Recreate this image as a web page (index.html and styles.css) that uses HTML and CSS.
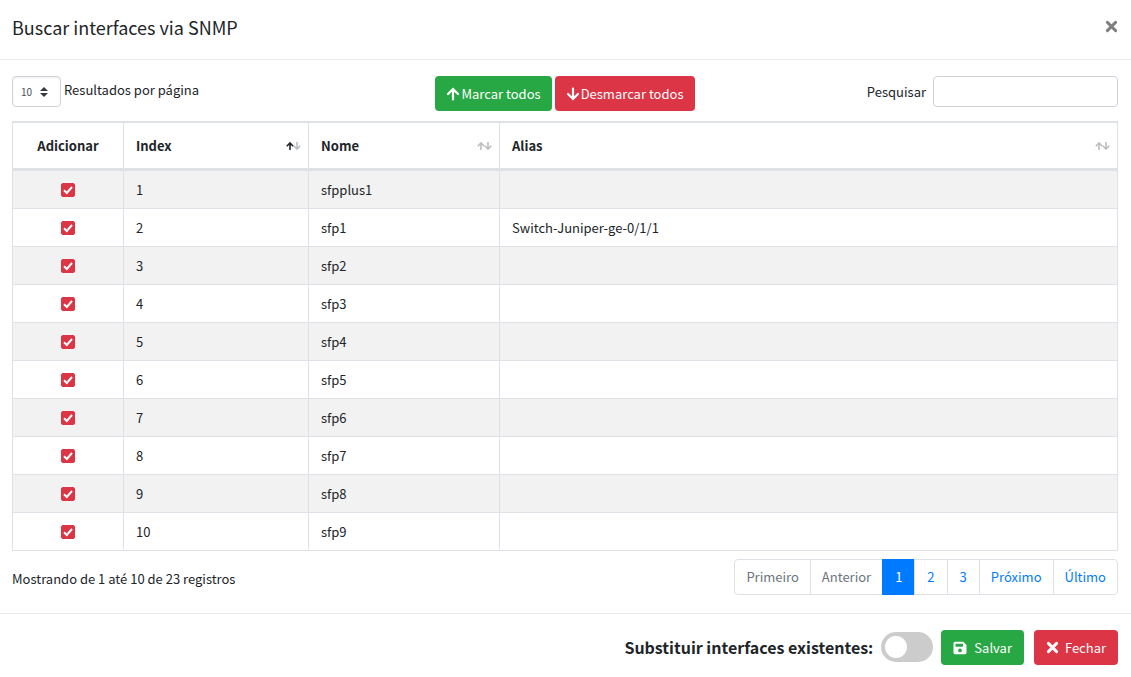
FILE: index.html
```html
<!DOCTYPE html>
<html lang="pt-BR">
<head>
<meta charset="utf-8">
<meta name="viewport" content="width=device-width, initial-scale=1">
<title>Buscar interfaces via SNMP</title>
<link rel="stylesheet" href="styles.css">
</head>
<body>
<svg class="defs" aria-hidden="true">
  <symbol id="arrow-up" viewBox="0 0 14 14"><path d="M7 12.500V2M2 7l5-5 5 5" fill="none" stroke="currentColor" stroke-width="2.200" stroke-linecap="round"/></symbol>
  <symbol id="arrow-down" viewBox="0 0 14 14"><path d="M7 1.500V12M2 7l5 5 5-5" fill="none" stroke="currentColor" stroke-width="2.200" stroke-linecap="round"/></symbol>
  <symbol id="cross" viewBox="0 0 12 12"><path d="M2.200 2.200l7.600 7.600M9.800 2.200l-7.600 7.600" fill="none" stroke="currentColor" stroke-width="2.700" stroke-linecap="round"/></symbol>
  <symbol id="save" viewBox="0 0 14 14"><path fill-rule="evenodd" fill="currentColor" d="M2 .8h8.200L13.500 4v7.700a1.500 1.500 0 0 1-1.500 1.500H2A1.500 1.500 0 0 1 .5 11.700V2.300A1.500 1.500 0 0 1 2 .8zM2.500 2.800v3h7.500v-3zM7 7.500a1.900 1.900 0 1 0 0 3.800 1.900 1.900 0 0 0 0-3.800z"/></symbol>
  <symbol id="sort" viewBox="0 0 15 10"><path class="sort-up" d="M4 9V1.500M.8 5.200L4 2l3.200 3.200"/><path class="sort-down" d="M11 1v7.500M7.800 4.800L11 8l3.200-3.200"/></symbol>
  <symbol id="tick" viewBox="0 0 14 14"><path d="M3 7.200l2.800 2.800L11 4" fill="none" stroke="#fff" stroke-width="2"/></symbol>
</svg>
<main class="modal">
  <header class="modal-header">
    <h1 class="modal-title">Buscar interfaces via SNMP</h1>
    <button class="close" type="button" aria-label="Fechar janela"><svg class="icon-small"><use href="#cross"/></svg></button>
  </header>
  <section class="modal-body">
    <div class="toolbar">
      <div class="length">
        <span class="select-wrap">
          <select id="length" class="select"><option>10</option><option>25</option><option>50</option></select>
          <svg class="select-arrows" viewBox="0 0 8 10"><path d="M4 0L8 4H0zM4 10L0 6h8z" fill="#343a40"/></svg>
        </span>
        <label for="length">Resultados por página</label>
      </div>
      <div class="actions">
        <button class="btn btn-green" type="button"><svg class="icon"><use href="#arrow-up"/></svg>Marcar todos</button>
        <button class="btn btn-red" type="button"><svg class="icon"><use href="#arrow-down"/></svg>Desmarcar todos</button>
      </div>
      <div class="search">
        <label for="search">Pesquisar</label>
        <input id="search" class="search-input" type="search">
      </div>
    </div>
    <table class="table">
      <colgroup><col class="col-add"><col class="col-index"><col class="col-name"><col></colgroup>
      <thead>
        <tr>
          <th class="center">Adicionar</th>
          <th><div class="head">Index<svg class="sort ascending"><use href="#sort"/></svg></div></th>
          <th><div class="head">Nome<svg class="sort"><use href="#sort"/></svg></div></th>
          <th><div class="head">Alias<svg class="sort"><use href="#sort"/></svg></div></th>
        </tr>
      </thead>
      <tbody>
        <tr><td class="center"><span class="check-wrap"><input class="check" type="checkbox" aria-label="Adicionar sfpplus1" checked><svg class="tick"><use href="#tick"/></svg></span></td><td>1</td><td>sfpplus1</td><td></td></tr>
        <tr><td class="center"><span class="check-wrap"><input class="check" type="checkbox" aria-label="Adicionar sfp1" checked><svg class="tick"><use href="#tick"/></svg></span></td><td>2</td><td>sfp1</td><td>Switch-Juniper-ge-0/1/1</td></tr>
        <tr><td class="center"><span class="check-wrap"><input class="check" type="checkbox" aria-label="Adicionar sfp2" checked><svg class="tick"><use href="#tick"/></svg></span></td><td>3</td><td>sfp2</td><td></td></tr>
        <tr><td class="center"><span class="check-wrap"><input class="check" type="checkbox" aria-label="Adicionar sfp3" checked><svg class="tick"><use href="#tick"/></svg></span></td><td>4</td><td>sfp3</td><td></td></tr>
        <tr><td class="center"><span class="check-wrap"><input class="check" type="checkbox" aria-label="Adicionar sfp4" checked><svg class="tick"><use href="#tick"/></svg></span></td><td>5</td><td>sfp4</td><td></td></tr>
        <tr><td class="center"><span class="check-wrap"><input class="check" type="checkbox" aria-label="Adicionar sfp5" checked><svg class="tick"><use href="#tick"/></svg></span></td><td>6</td><td>sfp5</td><td></td></tr>
        <tr><td class="center"><span class="check-wrap"><input class="check" type="checkbox" aria-label="Adicionar sfp6" checked><svg class="tick"><use href="#tick"/></svg></span></td><td>7</td><td>sfp6</td><td></td></tr>
        <tr><td class="center"><span class="check-wrap"><input class="check" type="checkbox" aria-label="Adicionar sfp7" checked><svg class="tick"><use href="#tick"/></svg></span></td><td>8</td><td>sfp7</td><td></td></tr>
        <tr><td class="center"><span class="check-wrap"><input class="check" type="checkbox" aria-label="Adicionar sfp8" checked><svg class="tick"><use href="#tick"/></svg></span></td><td>9</td><td>sfp8</td><td></td></tr>
        <tr><td class="center"><span class="check-wrap"><input class="check" type="checkbox" aria-label="Adicionar sfp9" checked><svg class="tick"><use href="#tick"/></svg></span></td><td>10</td><td>sfp9</td><td></td></tr>
      </tbody>
    </table>
    <div class="table-footer">
      <p class="info">Mostrando de 1 até 10 de 23 registros</p>
      <nav class="pagination" aria-label="Paginação">
        <a class="page disabled" href="#">Primeiro</a>
        <a class="page disabled" href="#">Anterior</a>
        <a class="page number current" href="#" aria-current="page">1</a>
        <a class="page number" href="#">2</a>
        <a class="page number" href="#">3</a>
        <a class="page" href="#">Próximo</a>
        <a class="page" href="#">Último</a>
      </nav>
    </div>
  </section>
  <footer class="modal-footer">
    <label class="replace" for="replace">Substituir interfaces existentes:</label>
    <input id="replace" class="switch" type="checkbox" role="switch">
    <button class="btn btn-wide btn-green" type="button"><svg class="icon"><use href="#save"/></svg>Salvar</button>
    <button class="btn btn-wide btn-red btn-last" type="button"><svg class="icon-small"><use href="#cross"/></svg>Fechar</button>
  </footer>
</main>
</body>
</html>
```
FILE: styles.css
```css
* { box-sizing: border-box; }
body {
  margin: 0;
  background: #fff;
  color: #212529;
  font: 13px/21px "Noto Sans CJK SC", "Noto Sans", sans-serif;
}
button, input, select { font: inherit; }
.defs { position: absolute; width: 0; height: 0; }

.modal-header {
  display: flex;
  justify-content: space-between;
  align-items: flex-start;
  padding: 13px 13px 18px 12px;
  border-bottom: 1px solid #e9ecef;
}
.modal-title { margin: 0; font-size: 18px; line-height: 28px; font-weight: 400; }
.close { display: flex; padding: 7px 0; border: 0; background: none; color: #7f7f7f; cursor: pointer; }

.modal-body { padding: 16px 13px 18px 12px; }
.toolbar {
  display: grid;
  grid-template-columns: 1fr auto 1fr;
  align-items: start;
  margin-bottom: 10px;
}
.length { display: flex; gap: 3px; line-height: 28px; }
.select-wrap { position: relative; display: flex; }
.select {
  appearance: none;
  width: 49px;
  height: 31px;
  padding: 0 8px;
  border: 1px solid #ced4da;
  border-radius: 4px;
  background: #fff;
  color: #495057;
  font-size: 10px;
  box-shadow: inset 0 1px 2px rgba(0, 0, 0, .08);
}
.select-arrows { position: absolute; top: 11px; right: 13px; width: 8px; height: 10px; pointer-events: none; }
.actions { display: flex; gap: 3px; }
.btn {
  display: flex;
  align-items: center;
  gap: 1px;
  height: 35px;
  padding: 0 11px;
  border: 0;
  border-radius: 4px;
  color: #fff;
  white-space: nowrap;
  cursor: pointer;
}
.btn-green { background: #28a745; }
.btn-red { background: #dc3545; }
.icon { width: 14px; height: 14px; }
.icon-small { width: 13px; height: 13px; }
.search { display: flex; justify-content: flex-end; gap: 7px; line-height: 32px; }
.search-input {
  appearance: none;
  width: 185px;
  height: 31px;
  padding: 4px 8px;
  border: 1px solid #ced4da;
  border-radius: 4px;
  background: #fff;
}

.table {
  width: 100%;
  table-layout: fixed;
  border: solid #dee2e6;
  border-width: 1px 1px 1px 0;
  border-collapse: separate;
  border-spacing: 0;
}
.col-add { width: 111px; }
.col-index { width: 185px; }
.col-name { width: 191px; }
.table th, .table td { padding: 8px 12px; border: solid #dee2e6; border-width: 1px 0 0 1px; text-align: left; }
.table th { padding: 12px 7px 12px 12px; border-bottom-width: 2px; font-weight: 700; }
.table td { height: 38px; }
.table .center { padding: 0 12px; text-align: center; }
.table tbody tr:nth-child(odd) { background: #f2f2f2; }
.head { display: flex; justify-content: space-between; align-items: center; }
.sort { width: 15px; height: 10px; color: #bdbebf; --up: #bdbebf; }
.sort.ascending { --up: #212529; }
.sort-up, .sort-down { fill: none; stroke: currentColor; stroke-width: 1.6px; }
.sort-up { stroke: var(--up); }
.check-wrap { position: relative; display: block; width: 14px; height: 14px; margin: 0 auto; }
.check {
  appearance: none;
  display: block;
  width: 14px;
  height: 14px;
  margin: 0;
  border: 1px solid #dc3545;
  border-radius: 2px;
  background: #fff;
}
.check:checked { background: #dc3545; }
.tick { position: absolute; top: 0; left: 0; width: 14px; height: 14px; pointer-events: none; }

.table-footer { display: flex; justify-content: space-between; align-items: flex-start; padding-top: 8px; }
.info { margin: 9px 0 0; }
.pagination { display: flex; }
.page {
  padding: 7px 11px;
  margin-left: -1px;
  border: 1px solid #dee2e6;
  color: #007bff;
  line-height: 20px;
  text-decoration: none;
}
.page:first-child { border-radius: 4px 0 0 4px; }
.page:last-child { border-radius: 0 4px 4px 0; }
.page.number { padding: 7px 12px; }
.page.disabled { color: #6c757d; }
.page.current { border-color: #007bff; background: #007bff; color: #fff; }

.modal-footer {
  display: flex;
  justify-content: flex-end;
  align-items: flex-start;
  gap: 8px;
  padding: 16px 13px 12px 12px;
  border-top: 1px solid #e9ecef;
}
.replace { font-size: 16px; line-height: 34px; font-weight: 700; }
.switch {
  appearance: none;
  width: 52px;
  height: 30px;
  margin: 2px 0 0;
  padding: 4px;
  border-radius: 15px;
  background: #ccc;
}
.switch::before { content: ""; display: block; width: 22px; height: 22px; border-radius: 50%; background: #fff; }
.switch:checked { background: #28a745; }
.switch:checked::before { margin-left: auto; }
.btn-wide { gap: 7px; padding: 0 12px; }
.btn-last { gap: 6px; margin-left: 2px; }
```
